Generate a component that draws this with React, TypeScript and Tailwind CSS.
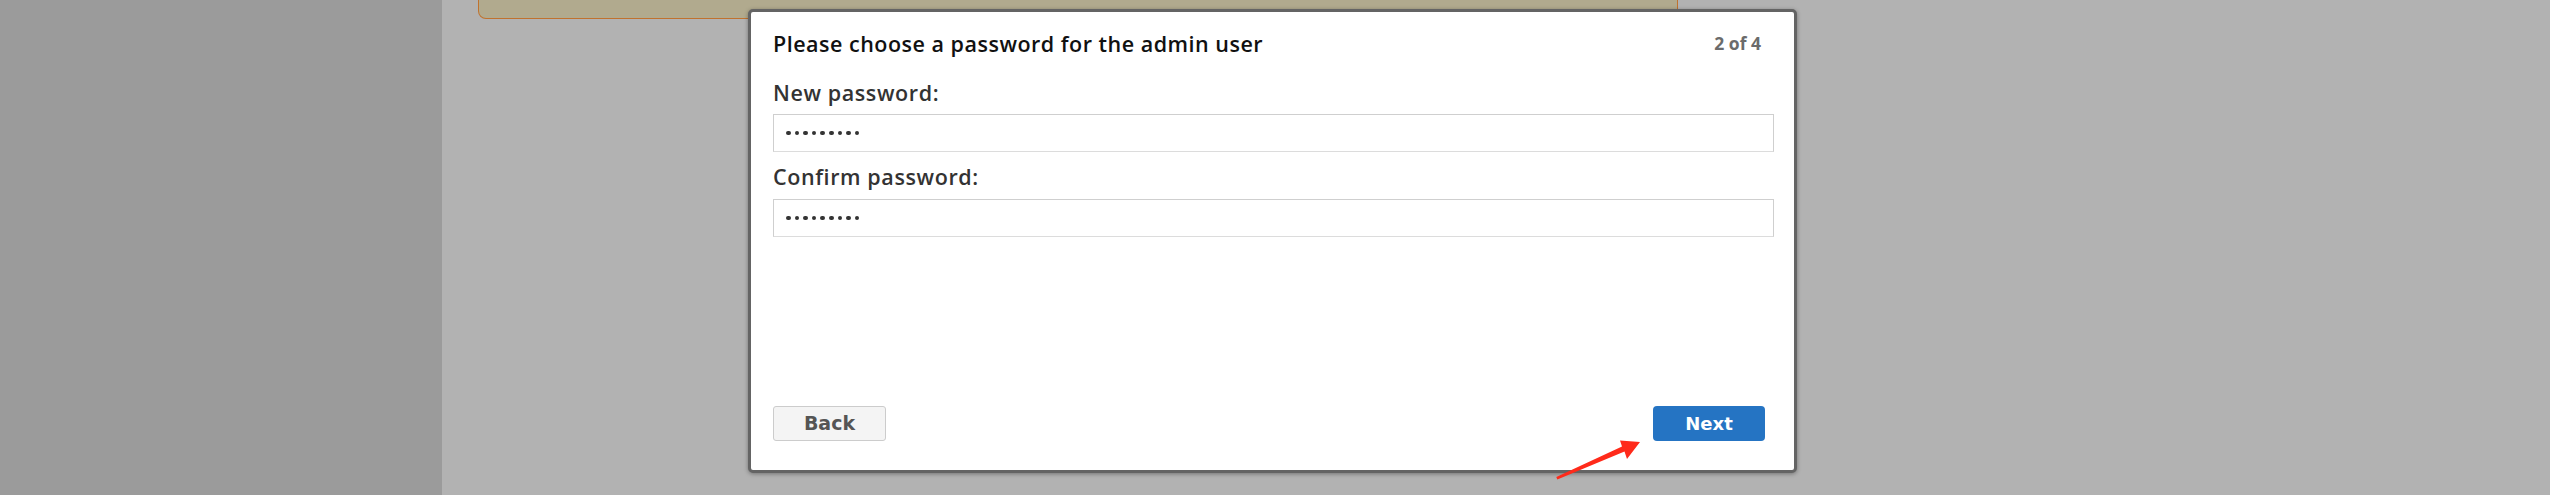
import React from "react";

function Dots() {
  return (
    <div className="flex items-center gap-[4px] pl-[12px]">
      {Array.from({ length: 9 }).map((_, i) => (
        <div key={i} className="h-[4.6px] w-[4.6px] rounded-full bg-[#333]" />
      ))}
    </div>
  );
}

export default function App() {
  return (
    <div className="flex h-[495px] w-[2550px] overflow-hidden" style={{ fontFamily: "'Open Sans', Lato, sans-serif" }}>
      <div className="h-full w-[442px] bg-[#9b9b9b]" />
      <div className="relative h-full flex-1 bg-[#b2b2b2]">
        <div className="ml-[36px] h-[19px] w-[1200px] rounded-b-[8px] border-x border-b border-[#c0722e] bg-[#b1aa8e]" />

        <div className="absolute left-[306px] top-[9px] flex h-[464px] w-[1049px] flex-col rounded-[5px] border-[3px] border-[#646464] bg-white pl-[22px] pr-[20px] pt-[20px] pb-[29px] shadow-[0_1px_4px_rgba(0,0,0,0.35)]">
          <div className="flex items-start justify-between pr-[13px]">
            <div className="text-[21.5px] font-semibold leading-[24px] tracking-[0.5px] text-[#111]">
              Please choose a password for the admin user
            </div>
            <div className="mt-[1px] text-[17.5px] font-bold leading-[20px] text-[#6b6b6b]">2 of 4</div>
          </div>

          <div className="mt-[24px] text-[21.5px] font-semibold leading-[25px] tracking-[0.6px] text-[#333]">New password:</div>
          <div className="mt-[9px] flex h-[38px] items-center border border-[#cfcfcf] border-b-[#dcdcdc] bg-white">
            <Dots />
          </div>

          <div className="mt-[12px] text-[21.5px] font-semibold leading-[25px] tracking-[0.6px] text-[#333]">Confirm password:</div>
          <div className="mt-[10px] flex h-[38px] items-center border border-[#cfcfcf] border-b-[#dcdcdc] bg-white">
            <Dots />
          </div>

          <div className="flex-1" />

          <div className="flex items-center justify-between pr-[9px]">
            <button
              className="flex h-[35px] w-[113px] items-center justify-center rounded-[3px] border border-[#cccccc] bg-[#f4f4f4] text-[19px] font-bold text-[#555]"
              style={{ fontFamily: "'DejaVu Sans', Verdana, sans-serif" }}
            >
              Back
            </button>
            <button
              className="flex h-[35px] w-[112px] items-center justify-center rounded-[4px] bg-[#2574c3] text-[18px] font-bold text-white"
              style={{ fontFamily: "'DejaVu Sans', Verdana, sans-serif" }}
            >
              Next
            </button>
          </div>
        </div>

        <svg className="absolute left-[1108px] top-[435px]" width="95" height="50" viewBox="0 0 95 50">
          <polygon points="6.3,42 72,11.5 70,5.5 90,7 77,24 74.5,16.5 7.3,44.5" fill="#ff2a1a" />
        </svg>
      </div>
    </div>
  );
}
